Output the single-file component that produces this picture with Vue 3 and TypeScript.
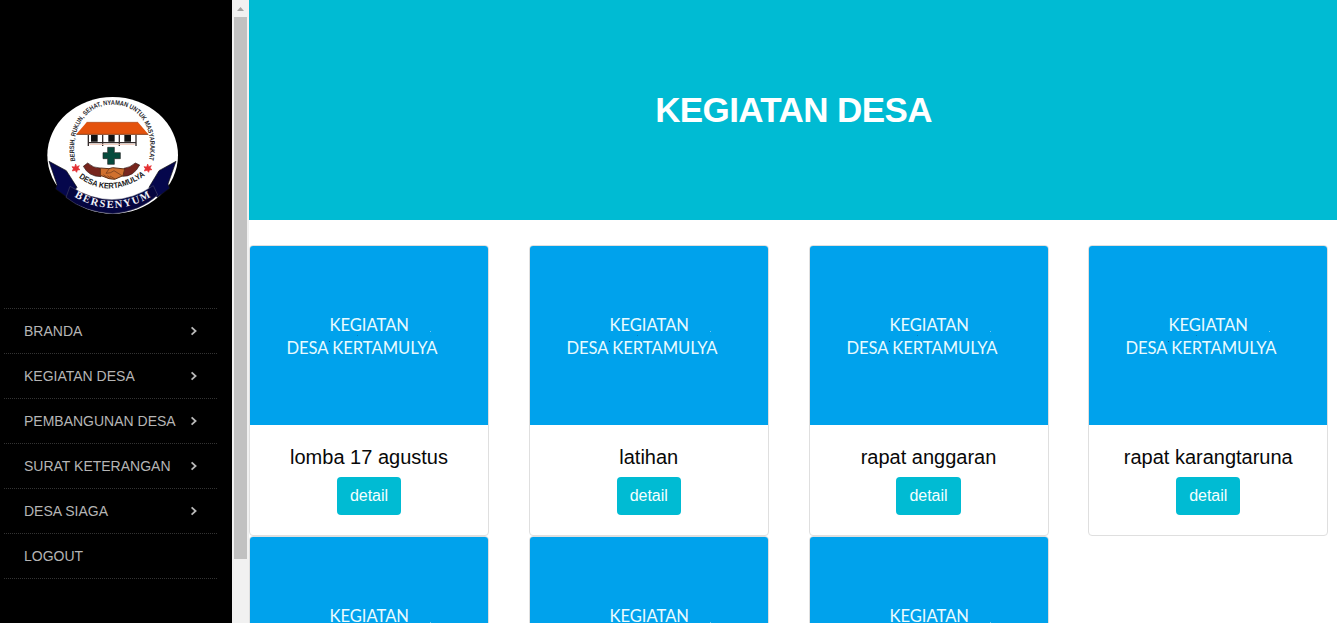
<script setup lang="ts">
interface MenuItem {
  label: string
  expandable: boolean
}

const menu: MenuItem[] = [
  { label: 'BRANDA', expandable: true },
  { label: 'KEGIATAN DESA', expandable: true },
  { label: 'PEMBANGUNAN DESA', expandable: true },
  { label: 'SURAT KETERANGAN', expandable: true },
  { label: 'DESA SIAGA', expandable: true },
  { label: 'LOGOUT', expandable: false },
]

const activities: string[] = [
  'lomba 17 agustus',
  'latihan',
  'rapat anggaran',
  'rapat karangtaruna',
  'kerja bakti',
  'posyandu',
  'musyawarah',
]
</script>

<template>
  <div class="layout">
    <aside class="sidebar">
      <div class="brand">
        <svg class="logo" viewBox="0 0 435 390" role="img" aria-label="Desa Kertamulya">
          <defs>
            <path id="motto-arc" d="M106 213 C90 130 128 44 217 44 C306 44 345 125 326 215" />
            <path id="village-arc" d="M116 262 Q208 332 316 256" />
            <path id="ribbon-arc" d="M98 317 Q218 391 338 317" />
          </defs>
          <ellipse cx="218" cy="196" rx="196" ry="175" fill="#fff" />
          <text class="motto">
            <textPath href="#motto-arc" textLength="465" lengthAdjust="spacingAndGlyphs">BERSIH, RUKUN, SEHAT, NYAMAN UNTUK MASYARAKAT</textPath>
          </text>
          <path d="M140 97H294L325 133H109Z" fill="#e4520d" />
          <path d="M109 133H325" stroke="#87401c" stroke-width="3" />
          <path d="M140 97H294" stroke="#a9481a" stroke-width="2" />
          <path d="M145 136H288V160H145Z" fill="#fff" />
          <path d="M153 135h20v20h-20zM205 135h19v20h-19zM253 135h20v20h-20z" fill="#111" />
          <path d="M143 158H290M145 135V168M188 135V168M238 135V168M288 135V168" stroke="#342c2c" stroke-width="4" />
          <path d="M149 163H284" stroke="#f0c4b4" stroke-width="3" />
          <path d="M203 172h20v16h18v18h-18v17h-20v-17h-14v-18h14z" fill="#064b3d" stroke="#252525" stroke-width="2" />
          <path d="M130 229L143 219Q160 235 181 234L183 260Q146 260 130 229Z" fill="#77251d" stroke="#301b18" stroke-width="2" />
          <path d="M299 225L286 219Q270 233 252 235L248 259Q281 260 299 225Z" fill="#77251d" stroke="#301b18" stroke-width="2" />
          <path d="M181 234L207 236L218 233L254 237L249 257L224 268L207 266L181 256Z" fill="#d0702f" stroke="#623116" stroke-width="3" />
          <path d="M207 237L198 250Q214 250 222 242L246 257M203 263l-13-9M214 266l-12-9M225 267l-15-9" fill="none" stroke="#65371b" stroke-width="2" />
          <path d="M107 222l3 8 8-3-4 7 6 5-8 1-2 7-5-6-8 2 3-7-4-6 8 1zM323 222l3 8 8-3-4 7 6 5-8 1-2 7-5-6-8 2 3-7-4-6 8 1z" fill="#e42f32" stroke="#e42f32" stroke-width="2" />
          <text class="village">
            <textPath href="#village-arc" textLength="216" lengthAdjust="spacingAndGlyphs">DESA KERTAMULYA</textPath>
          </text>
          <path d="M27 214L79 242L111 292L84 324L47 297L51 284Z" fill="#05074c" stroke="#111" stroke-width="2" />
          <path d="M408 214L357 242L327 292L352 322L389 295L384 282Z" fill="#05074c" stroke="#111" stroke-width="2" />
          <path d="M90 289Q218 370 340 287L353 315Q300 365 218 371Q132 366 78 322Z" fill="#05053f" stroke="#55556e" stroke-width="1.5" />
          <text class="ribbon">
            <textPath href="#ribbon-arc" startOffset="6" textLength="242">BERSENYUM</textPath>
          </text>
        </svg>
      </div>

      <nav class="menu">
        <a v-for="item in menu" :key="item.label" class="menu-item">
          <span>{{ item.label }}</span>
          <svg v-if="item.expandable" class="chevron" viewBox="0 0 7 10">
            <path d="M1.6 1.3L5.6 5L1.6 8.7" />
          </svg>
        </a>
      </nav>
    </aside>

    <div class="scrollbar">
      <svg class="arrow" viewBox="0 0 17 17"><path d="M5 11h7L8.5 7z" /></svg>
      <div class="thumb"></div>
    </div>

    <main class="content">
      <header class="hero"><h1>KEGIATAN DESA</h1></header>
      <section class="cards">
        <article v-for="title in activities" :key="title" class="card">
          <svg class="cover" viewBox="0 0 238 179">
            <rect width="238" height="179" fill="#00a2ec" />
            <text x="79.5" y="84.7" textLength="79.5" lengthAdjust="spacingAndGlyphs">KEGIATAN</text>
            <text x="36.4" y="108" textLength="151.2" lengthAdjust="spacingAndGlyphs">DESA KERTAMULYA</text>
            <path d="M79 95h1v1h-1z" fill="#064b79" />
            <path d="M107 89h1v1h-1z" fill="#087bb5" />
            <path d="M180 85h1v1h-1z" fill="#73c8ee" />
          </svg>
          <div class="card-body">
            <h2>{{ title }}</h2>
            <a class="detail">detail</a>
          </div>
        </article>
      </section>
    </main>
  </div>
</template>

<style>
body {
  margin: 0;
  overflow: hidden;
}
</style>

<style scoped>
.layout {
  display: flex;
  width: 100%;
  height: 623px;
  overflow: hidden;
  background: #fff;
  font-family: "Liberation Sans", Arial, sans-serif;
}

.sidebar {
  flex: 0 0 232px;
  box-sizing: border-box;
  background: #000;
}

.brand {
  box-sizing: border-box;
  height: 308px;
  padding: 90px 0 0 40px;
}

.logo {
  display: block;
  width: 145px;
  height: 130px;
}

.motto {
  fill: #29282e;
  font-size: 20px;
  font-weight: bold;
}

.village {
  fill: #171717;
  font-size: 24px;
  font-weight: bold;
}

.ribbon {
  fill: #f1f1f8;
  font-family: "Liberation Serif", serif;
  font-size: 32px;
  font-weight: bold;
}

.menu {
  width: 213px;
  margin-left: 4px;
  border-top: 1px dotted #333;
}

.menu-item {
  display: flex;
  align-items: center;
  justify-content: space-between;
  box-sizing: border-box;
  height: 45px;
  padding: 0 20px;
  border-bottom: 1px dotted #333;
  color: #b5b5b5;
  font-size: 14px;
  white-space: nowrap;
}

.chevron {
  width: 7px;
  height: 10px;
  fill: none;
  stroke: #b8b8b8;
  stroke-width: 1.8;
}

.scrollbar {
  flex: 0 0 17px;
  background: #f1f1f1;
}

.arrow {
  display: block;
  width: 17px;
  height: 17px;
  fill: #a3a3a3;
}

.thumb {
  width: 13px;
  height: 542px;
  margin-left: 2px;
  background: #c1c1c1;
}

.content {
  flex: 1;
  min-width: 0;
}

.hero {
  display: flex;
  align-items: center;
  justify-content: center;
  height: 220px;
  background: #00bbd3;
}

.hero h1 {
  margin: 0;
  padding-left: 1px;
  color: #fff;
  font-size: 35px;
  letter-spacing: -0.6px;
  line-height: 40px;
}

.cards {
  display: grid;
  grid-template-columns: repeat(4, 240px);
  column-gap: 39.75px;
  padding-top: 25px;
}

.card {
  box-sizing: border-box;
  height: 291px;
  overflow: hidden;
  border: 1px solid #dfdfdf;
  border-radius: 4px;
  background: #fff;
}

.cover {
  display: block;
  width: 238px;
  height: 179px;
}

.cover text {
  fill: #e9fbff;
  font-family: Lato, sans-serif;
  font-size: 17px;
}

.card-body {
  display: flex;
  flex-direction: column;
  align-items: center;
  padding-top: 20px;
}

.card h2 {
  margin: 0 0 8px;
  color: #080808;
  font-size: 20px;
  font-weight: 400;
  line-height: 24px;
}

.detail {
  box-sizing: border-box;
  height: 38px;
  padding: 7px 13px;
  border-radius: 4px;
  background: #00bbd3;
  color: #f4ffff;
  font-size: 16px;
  line-height: 24px;
}
</style>
